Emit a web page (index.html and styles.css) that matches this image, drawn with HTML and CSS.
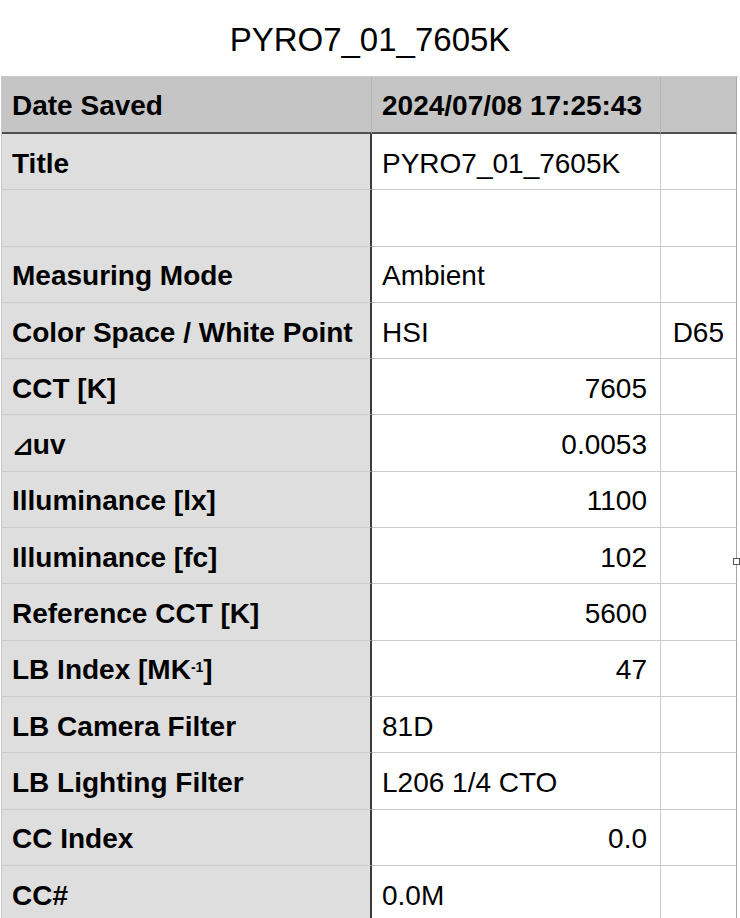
FILE: index.html
```html
<!DOCTYPE html>
<html>
<head>
<meta charset="utf-8">
<link rel="stylesheet" href="styles.css">
</head>
<body>
<div class="page">
  <h1 class="title">PYRO7_01_7605K</h1>
  <div class="sheet">
    <div class="grid">
      <div class="cell head label">Date Saved</div>
      <div class="cell head value">2024/07/08 17:25:43</div>
      <div class="cell head extra"></div>

      <div class="cell label">Title</div>
      <div class="cell value">PYRO7_01_7605K</div>
      <div class="cell extra"></div>

      <div class="cell label"></div>
      <div class="cell value"></div>
      <div class="cell extra"></div>

      <div class="cell label">Measuring Mode</div>
      <div class="cell value">Ambient</div>
      <div class="cell extra"></div>

      <div class="cell label">Color Space / White Point</div>
      <div class="cell value">HSI</div>
      <div class="cell extra">D65</div>

      <div class="cell label">CCT [K]</div>
      <div class="cell value num">7605</div>
      <div class="cell extra"></div>

      <div class="cell label"><span class="delta">⊿</span>uv</div>
      <div class="cell value num">0.0053</div>
      <div class="cell extra"></div>

      <div class="cell label">Illuminance [lx]</div>
      <div class="cell value num">1100</div>
      <div class="cell extra"></div>

      <div class="cell label">Illuminance [fc]</div>
      <div class="cell value num">102</div>
      <div class="cell extra"></div>

      <div class="cell label">Reference CCT [K]</div>
      <div class="cell value num">5600</div>
      <div class="cell extra"></div>

      <div class="cell label">LB Index [MK<sup class="sup">-1</sup>]</div>
      <div class="cell value num">47</div>
      <div class="cell extra"></div>

      <div class="cell label">LB Camera Filter</div>
      <div class="cell value">81D</div>
      <div class="cell extra"></div>

      <div class="cell label">LB Lighting Filter</div>
      <div class="cell value">L206 1/4 CTO</div>
      <div class="cell extra"></div>

      <div class="cell label">CC Index</div>
      <div class="cell value num">0.0</div>
      <div class="cell extra"></div>

      <div class="cell label">CC#</div>
      <div class="cell value">0.0M</div>
      <div class="cell extra"></div>
    </div>
    <div class="handle"></div>
  </div>
</div>
</body>
</html>
```

FILE: styles.css
```css
html, body {
  margin: 0;
  padding: 0;
  background: #ffffff;
}

body {
  font-family: "Liberation Sans", Arial, sans-serif;
  color: #000;
  width: 740px;
  height: 918px;
  overflow: hidden;
}

.page {
  display: flex;
  flex-direction: column;
}

.title {
  margin: 0;
  height: 76px;
  display: flex;
  align-items: center;
  justify-content: center;
  font-weight: normal;
  font-size: 33px;
  padding-top: 4px;
  box-sizing: border-box;
}

.sheet {
  position: relative;
  margin-left: 1px;
  width: 739px;
}

.grid {
  display: grid;
  grid-template-columns: 370px 289px 76px;
  grid-template-rows: 57px;
  grid-auto-rows: 56.3px;
  border-top: 1px solid #c8c8c8;
  border-left: 1px solid #c8c8c8;
  width: 736px;
}

.cell {
  box-sizing: border-box;
  border-right: 1px solid #cbcbcb;
  border-bottom: 1px solid #cbcbcb;
  display: flex;
  align-items: center;
  padding: 4px 12px 0 12px;
  font-size: 28px;
  white-space: nowrap;
  background: #fff;
}

.label {
  background: #dedede;
  font-weight: bold;
  border-right: 2px solid #3c3c3c;
  padding-left: 10px;
}

.head {
  background: #c4c5c4;
  font-weight: bold;
  border-bottom: 2px solid #505050;
  border-right: 1px solid #b4b4b4;
  padding-top: 2px;
}

.head.label {
  border-right: 1px solid #b4b4b4;
}

.value {
  padding-left: 10px;
  padding-right: 13px;
}

.num {
  justify-content: flex-end;
}

.extra {
  justify-content: flex-end;
  padding-right: 12px;
  border-right: 1px solid #a8a8a8;
}

.delta {
  font-family: "DejaVu Sans", sans-serif;
  font-weight: bold;
  font-size: 26px;
  margin-right: -1px;
  position: relative;
  top: 1px;
}

.sup {
  font-size: 14px;
  line-height: 0;
  position: relative;
  top: -3px;
  vertical-align: super;
}

.handle {
  position: absolute;
  left: 732px;
  top: 482px;
  width: 5px;
  height: 5px;
  border: 1px solid #555;
  background: #fff;
}
```
